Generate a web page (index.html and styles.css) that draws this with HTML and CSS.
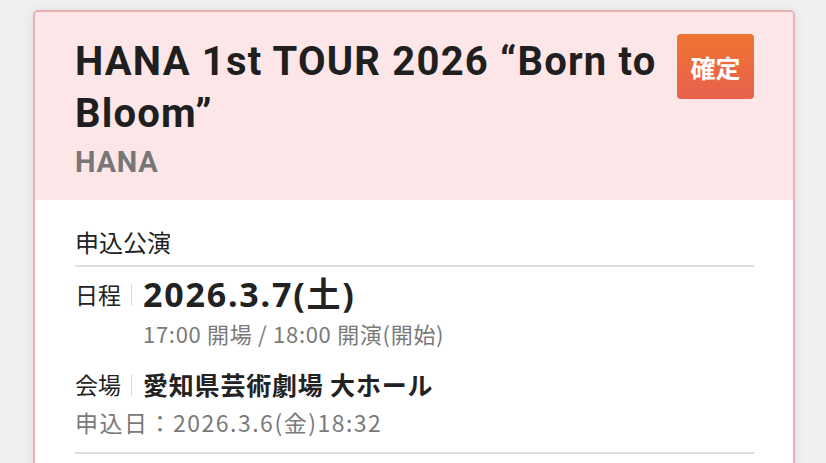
FILE: index.html
```html
<!DOCTYPE html>
<html lang="ja">
<head>
<meta charset="utf-8">
<link rel="stylesheet" href="styles.css">
</head>
<body>
<div class="card">
  <div class="card-head">
    <div class="head-text">
      <h1 class="title">HANA 1st TOUR 2026 “Born to Bloom”</h1>
      <div class="artist">HANA</div>
    </div>
    <div class="badge">確定</div>
  </div>
  <div class="card-body">
    <div class="section-title">申込公演</div>
    <div class="row">
      <span class="label">日程</span>
      <div class="value">
        <div class="date">2026.3.7(土)</div>
        <div class="times">17:00 開場 / 18:00 開演(開始)</div>
      </div>
    </div>
    <div class="row venue-row">
      <span class="label">会場</span>
      <div class="value"><div class="venue">愛知県芸術劇場 大ホール</div></div>
    </div>
    <div class="applied">申込日：2026.3.6(金)18:32</div>
    <div class="divider"></div>
  </div>
</div>
</body>
</html>
```

FILE: styles.css
```css
html, body {
  margin: 0;
  padding: 0;
}
body {
  background: #eef0f2;
  font-family: "Noto Sans CJK JP", "Noto Sans", sans-serif;
  color: #222;
  padding: 10px 31px 0 33px;
  height: 463px;
  box-sizing: border-box;
  overflow: hidden;
}
.card {
  border: 2px solid #e9b0b1;
  border-radius: 5px;
  background: #fff;
  box-shadow: 0 0 12px rgba(0, 0, 0, 0.08);
  overflow: hidden;
  height: 480px;
}
.card-head {
  background: #fce6e8;
  height: 188px;
  box-sizing: border-box;
  padding: 22px 39px 0 40px;
  display: flex;
  align-items: flex-start;
  gap: 12px;
}
.head-text {
  flex: 1;
  padding-top: 2px;
}
.title {
  margin: 0;
  font-family: Roboto, "Noto Sans", sans-serif;
  font-weight: 700;
  font-size: 40px;
  line-height: 52px;
  color: #1f1f1f;
  letter-spacing: 1.2px;
}
.artist {
  font-family: Roboto, sans-serif;
  font-weight: 700;
  font-size: 29px;
  line-height: 30px;
  margin-top: 7px;
  color: #777;
  letter-spacing: 0.8px;
}
.badge {
  width: 77px;
  height: 65px;
  border-radius: 4px;
  background: linear-gradient(#ee7431, #e9614e);
  color: #fff;
  font-weight: 700;
  font-size: 25px;
  display: flex;
  align-items: center;
  justify-content: center;
  flex-shrink: 0;
}
.card-body {
  padding: 25px 39px 0 40px;
}
.section-title {
  font-size: 24px;
  line-height: 34px;
  padding-bottom: 6px;
  border-bottom: 2px solid #dedede;
}
.row {
  display: flex;
  align-items: flex-start;
  margin-top: 8px;
}
.label {
  font-size: 23px;
  line-height: 38px;
  padding-right: 11px;
  position: relative;
}
.label::after {
  content: "";
  position: absolute;
  right: 0;
  top: 9px;
  width: 1px;
  height: 22px;
  background: #dadada;
}
.value {
  padding-left: 11px;
}
.date {
  font-family: "Noto Sans", "Noto Sans CJK JP", sans-serif;
  font-weight: 700;
  font-size: 34px;
  line-height: 38px;
  letter-spacing: 1.8px;
}
.times {
  font-size: 22px;
  line-height: 30px;
  color: #7a7a7a;
  margin-top: 5px;
  letter-spacing: 0.7px;
}
.venue-row {
  margin-top: 17px;
}
.venue {
  font-weight: 700;
  font-size: 25px;
  line-height: 38px;
  letter-spacing: 0.8px;
}
.applied {
  font-size: 23px;
  line-height: 30px;
  color: #7a7a7a;
  margin-top: 4px;
  letter-spacing: 1.5px;
}
.divider {
  height: 2px;
  background: #dedede;
  margin-top: 15px;
}
```
